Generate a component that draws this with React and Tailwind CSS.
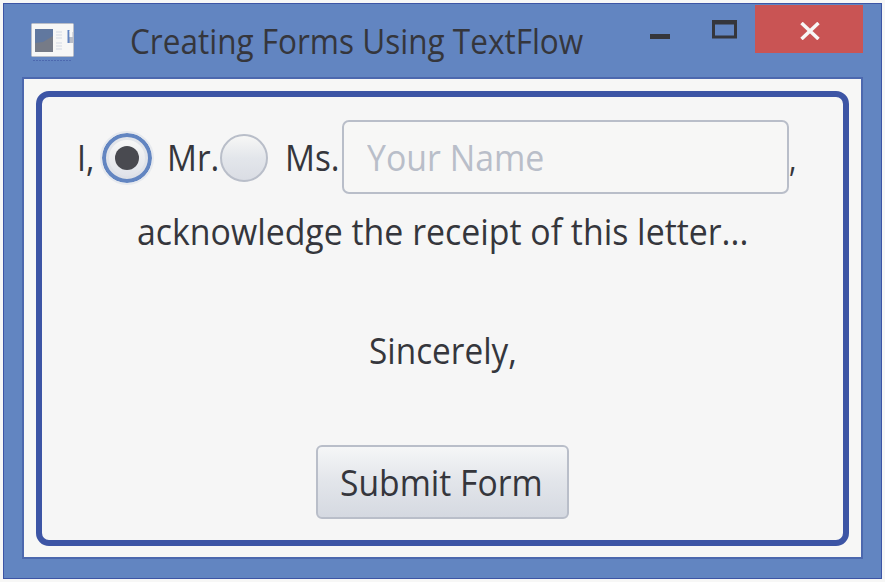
import React from "react";

function WindowIcon() {
  return (
    <svg width="43" height="38" viewBox="0 0 43 38" className="shrink-0">
      <path d="M2 37.5H40" stroke="#4c68ae" strokeWidth="1" strokeDasharray="2 1" />
      <rect x="0.5" y="0.5" width="42" height="33" rx="1" fill="#f7f7f6" stroke="#b9bec9" />
      <rect x="4" y="6" width="18" height="23" fill="#767b87" />
      <path d="M4 6h18v7l-10 6-8 1z" fill="#61789f" />
      <path d="M25 9h6M25 12h6M25 15h6M25 20h6M25 23h6M25 26h6" stroke="#e0e3ea" strokeWidth="1.5" />
      <path d="M40 9v11" stroke="#b9bec9" strokeWidth="5" />
      <path d="M37.5 7v13" stroke="#6285c1" strokeWidth="2" />
      <path d="M40 8v6" stroke="#f7f7f6" strokeWidth="3" />
    </svg>
  );
}

function Radio({ checked }) {
  return checked ? (
    <span className="mt-[2px] flex h-[50px] w-[50px] shrink-0 items-center justify-center rounded-full border-[4px] border-[#6285c1] bg-linear-to-b from-[#e3e6eb] to-[#dde0e7] outline-2 outline-[#e6e9ee]">
      <span className="flex h-9 w-9 items-center justify-center rounded-full bg-linear-to-b from-[#f7f7f6] to-[#e0e3ea]">
        <span className="h-6 w-6 rounded-full bg-[#494a50]" />
      </span>
    </span>
  ) : (
    <span className="mt-[2px] h-12 w-12 shrink-0 rounded-full border-2 border-[#b9bec9] bg-linear-to-b from-[#f7f7f6] via-[#e3e6eb] to-[#dadde4]" />
  );
}

export default function App() {
  return (
    <div className="h-[582px] w-[885px] overflow-hidden bg-[#f7f7f6] pt-[3px] pl-[3px] font-['Open_Sans','Noto_Sans',sans-serif] text-[36px] whitespace-nowrap text-[#35363c]">
      <div className="flex h-[576px] w-[879px] flex-col border border-[#3d55a5] bg-[#6285c1] pl-[18px]">
        <header className="flex h-[73px] items-start">
          <div className="ml-[9px] pt-[19px]"><WindowIcon /></div>
          <h1 className="ml-[56px] w-[520px] pt-[12px] text-[34px] leading-[50px] font-normal">
            <span className="inline-block origin-left scale-x-[0.927]">Creating Forms Using TextFlow</span>
          </h1>
          <svg width="20" height="5" className="mt-[30px] shrink-0"><path d="M0 2.5h20" stroke="#35363c" strokeWidth="5" /></svg>
          <svg width="25" height="20" className="mt-[15px] ml-[42px] shrink-0"><path d="M1.5 2.5h22v15.5h-22zM1.5 4h22" fill="none" stroke="#35363c" strokeWidth="3" /></svg>
          <button aria-label="Close" className="mt-px ml-[18px] flex h-12 w-[108px] shrink-0 items-center justify-center bg-[#c95454] pt-[3px] pl-[2px]">
            <svg width="20" height="18" viewBox="0 0 20 18"><path d="M1.5 1l17 16M18.5 1l-17 16" stroke="#f7f7f6" strokeWidth="3.5" /></svg>
          </button>
        </header>
        <main className="h-[482px] w-[841px] border-2 border-[#4c68ae] bg-[#f7f7f6] pt-3 pl-3">
          <section className="h-[455px] w-[813px] rounded-[13px] border-[6px] border-[#3d55a5] bg-[#f6f6f6] pt-[23px]">
            <div className="flex h-[74px] items-center pl-[34px]">
              <span className="w-[26px] pt-px pl-px"><span className="inline-block origin-left scale-x-[0.9]">I,</span></span>
              <Radio checked />
              <span className="w-[68px] shrink-0 pt-px pl-[15px]"><span className="inline-block origin-left scale-x-[0.925]">Mr.</span></span>
              <Radio />
              <span className="w-[74px] shrink-0 pt-px pl-[17px]"><span className="inline-block origin-left scale-x-[0.925]">Ms.</span></span>
              <div className="flex h-[74px] w-[447px] shrink-0 items-center rounded-[7px] border-2 border-[#b9bec9] bg-[#f7f7f6] pt-[2px] pl-[23px] text-[#b9bec9]">
                <span className="inline-block origin-left scale-x-[0.94]">Your Name</span>
              </div>
              <span className="inline-block origin-left scale-x-[0.8] pt-px">,</span>
            </div>
            <p className="mt-[13px] pl-[95px] leading-[50px]"><span className="inline-block origin-left scale-x-[0.94]">acknowledge the receipt of this letter...</span></p>
            <p className="mt-[69px] pl-[327px] leading-[50px]"><span className="inline-block origin-left scale-x-[0.926]">Sincerely,</span></p>
            <button className="mt-[69px] ml-[274px] flex h-[74px] w-[253px] items-center rounded-[6px] border-2 border-[#b9bec9] bg-linear-to-b from-[#f5f6f7] via-[#e2e5ea] to-[#d5d9e1] pt-[2px] pl-[22px]">
              <span className="inline-block origin-left scale-x-[0.935]">Submit Form</span>
            </button>
          </section>
        </main>
      </div>
    </div>
  );
}
